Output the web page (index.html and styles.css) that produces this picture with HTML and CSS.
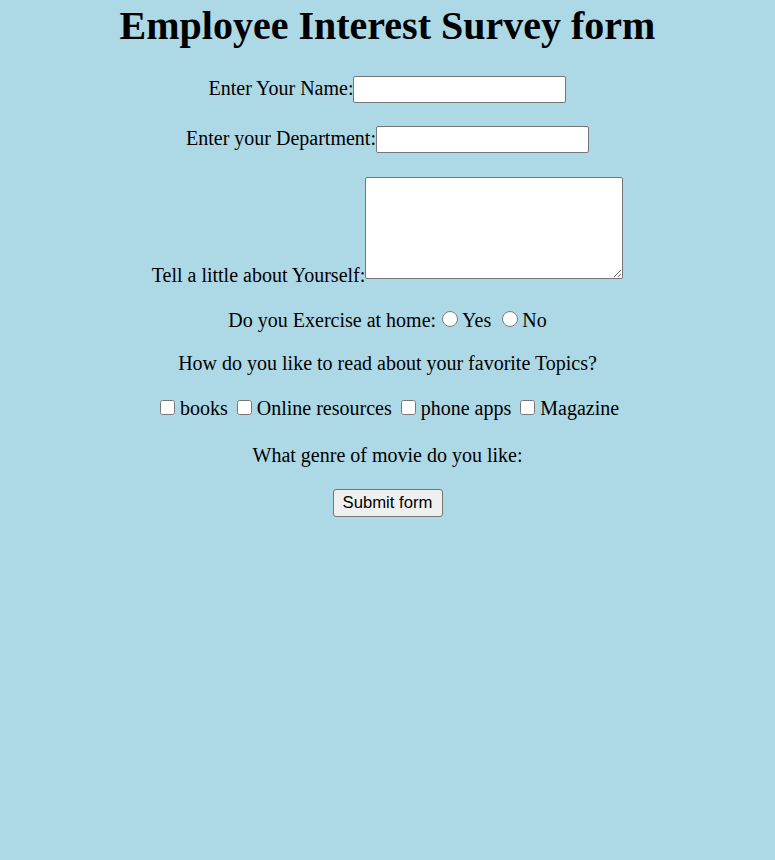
FILE: index.html
```html
<!DOCTYPE html>
<html>
<head>
<meta charset="utf-8">
<title>Employee Interest Survey form</title>
<link rel="stylesheet" href="styles.css">
</head>
<body>
<h1 class="title">Employee Interest Survey form</h1>
<form class="survey">
  <p class="row"><label>Enter Your Name:</label><input class="text" type="text"></p>
  <p class="row"><label>Enter your Department:</label><input class="text" type="text"></p>
  <p class="row"><label>Tell a little about Yourself:</label><textarea class="area"></textarea></p>
  <p class="row">Do you Exercise at home:<input class="radio" type="radio" name="ex">Yes <input class="radio" type="radio" name="ex">No</p>
  <p class="row">How do you like to read about your favorite Topics?</p>
  <p class="row row-checks"><input class="check" type="checkbox">books <input class="check" type="checkbox">Online resources <input class="check" type="checkbox">phone apps <input class="check" type="checkbox">Magazine</p>
  <p class="row row-genre">What genre of movie do you like:</p>
  <p class="row"><button class="submit" type="button">Submit form</button></p>
</form>
</body>
</html>
```

FILE: styles.css
```css
html, body {
  background: #add8e6;
}
body {
  margin: 0;
  font-family: "Liberation Serif", "Times New Roman", serif;
  font-size: 20px;
  color: #000;
  text-align: center;
}
.title {
  font-size: 40px;
  font-weight: bold;
  margin: 2px 0 27px;
}
.row {
  margin: 20px 0;
}
.row-checks {
  margin-top: 22px;
  margin-bottom: 24px;
}
.row-genre {
  margin-bottom: 22px;
}
.text {
  box-sizing: border-box;
  width: 213px;
  height: 27px;
  border: 1px solid #767676;
  border-radius: 2px;
  background: #fff;
  padding: 1px 3px;
  font-size: 16px;
  vertical-align: baseline;
  margin: 0 0 3px;
}
.area {
  box-sizing: border-box;
  width: 258px;
  height: 102px;
  border: 1px solid #767676;
  border-radius: 2px;
  background: #fff;
  margin: 1px 0 3px;
  vertical-align: baseline;
  font-size: 16px;
}
.radio {
  width: 16px;
  height: 16px;
  margin: 4px 4px 0 6px;
}
.check {
  width: 15px;
  height: 15px;
  margin: 3px 5px 0 4px;
}
.submit {
  font-family: "Liberation Sans", Arial, sans-serif;
  font-size: 16.7px;
  width: 110px;
  height: 28px;
  padding: 0;
  background: #efefef;
  border: 1px solid #767676;
  border-radius: 3px;
  color: #000;
}
```
